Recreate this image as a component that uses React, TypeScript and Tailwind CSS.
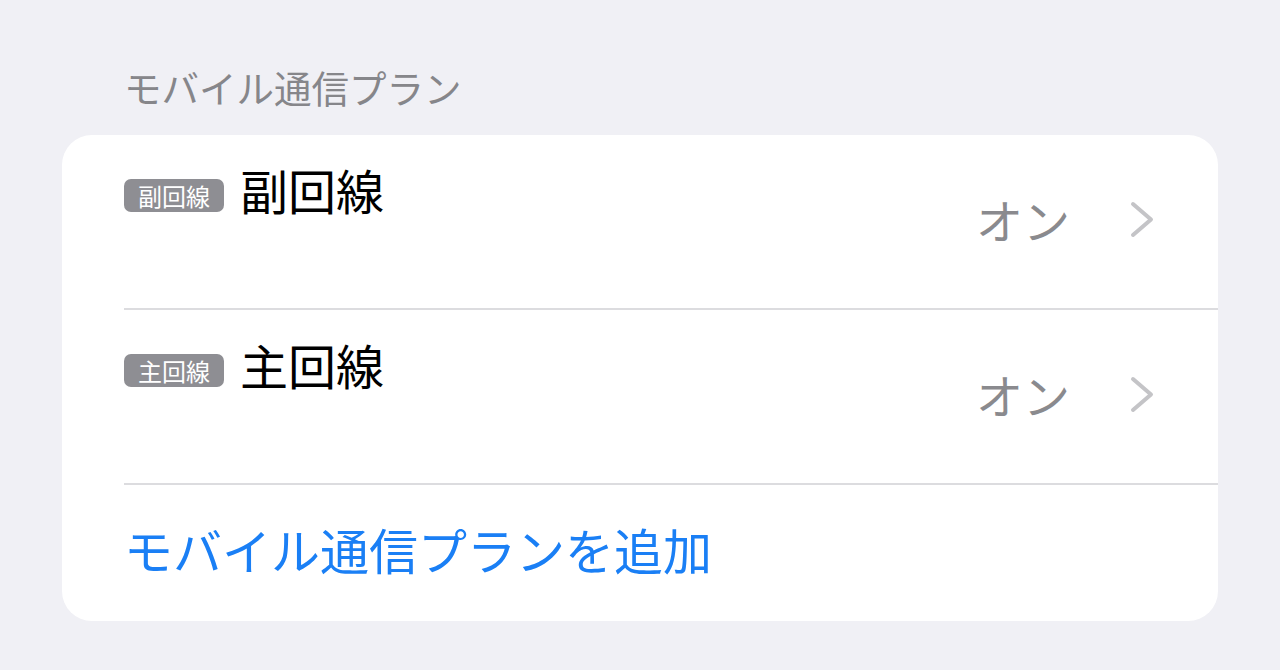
const FONT = { fontFamily: '"Noto Sans CJK JP", "Noto Sans", sans-serif' };

interface Line {
  badge: string;
  title: string;
  value: string;
}

const LINES: Line[] = [
  { badge: '副回線', title: '副回線', value: 'オン' },
  { badge: '主回線', title: '主回線', value: 'オン' },
];

function Chevron() {
  return (
    <svg width="25" height="37" viewBox="0 0 25 37" className="ml-[60px] mb-[4px]">
      <polyline
        points="3,3 21,18.5 3,34"
        fill="none"
        stroke="#c4c4c7"
        strokeWidth="4"
        strokeLinecap="round"
        strokeLinejoin="round"
      />
    </svg>
  );
}

function LineRow({ line }: { line: Line }) {
  return (
    <div className="flex items-center pr-[63px] h-[173px]">
      <div className="flex-1 self-start pt-[30px] flex items-start gap-[16px]">
        <span className="mt-[14px] h-[33px] px-[14px] rounded-[7px] bg-[#8e8e93] text-white text-[24px] leading-[33px]">
          {line.badge}
        </span>
        <span className="text-[48px] leading-[48px] text-black">{line.title}</span>
      </div>
      <span className="text-[47px] leading-[48px] text-[#8a8a8e] mb-[6px]">{line.value}</span>
      <Chevron />
    </div>
  );
}

export default function App() {
  return (
    <div className="w-[1280px] h-[670px] bg-[#f0f0f5] px-[62px] pt-[68px]" style={FONT}>
      <h2 className="pl-[62px] text-[37.5px] leading-[38px] text-[#86868a] mb-[29px]">モバイル通信プラン</h2>
      <div className="bg-white rounded-[30px] pl-[62px] overflow-hidden">
        <LineRow line={LINES[0]} />
        <div className="h-[2px] bg-[#dcdcdf]" />
        <LineRow line={LINES[1]} />
        <div className="h-[2px] bg-[#dcdcdf]" />
        <div className="h-[136px] flex items-center pb-[10px]">
          <span className="text-[49px] leading-[49px] text-[#1a7ff5]">モバイル通信プランを追加</span>
        </div>
      </div>
    </div>
  );
}
